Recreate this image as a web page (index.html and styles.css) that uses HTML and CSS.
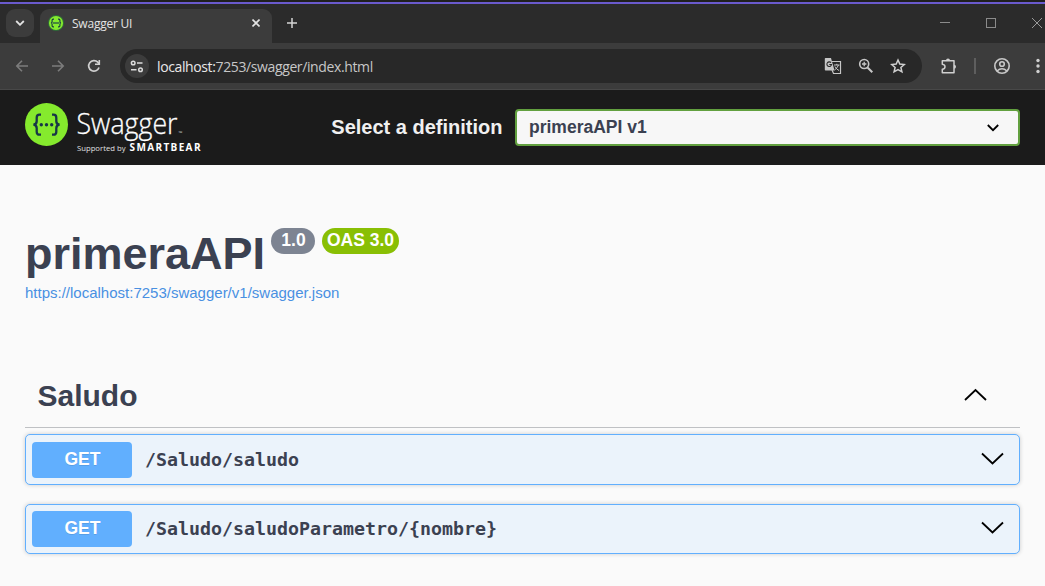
FILE: index.html
```html
<!DOCTYPE html>
<html lang="es">
<head>
<meta charset="utf-8">
<title>Swagger UI</title>
<link rel="stylesheet" href="styles.css">
</head>
<body>
<div class="desktop-edge"></div>
<div class="tab-strip">
  <div class="tab-search"><svg width="10" height="6" viewBox="0 0 10 6"><path d="M1.2 1L5 4.8L8.800 1" fill="none" stroke="#e3e3e3" stroke-width="1.8"/></svg></div>
  <div class="tab">
    <svg class="favicon" width="16" height="16" viewBox="0 0 43 43"><circle cx="21.500" cy="21.500" r="21.500" fill="#2f6b3a"/><circle cx="21.500" cy="21.500" r="19" fill="#85ea2d"/><g fill="none" stroke="#173647" stroke-width="3"><path d="M16 11h-2q-3 0-3 3v4q0 3-3 3.500q3 .5 3 3.500v4q0 3 3 3h2M27 11h2q3 0 3 3v4q0 3 3 3.500q-3 .5-3 3.500v4q0 3-3 3h-2"/><path d="M13 21.500h17"/></g></svg>
    <span class="tab-title">Swagger UI</span>
    <svg width="8" height="8" viewBox="0 0 8 8"><path d="M.5 .5L7.500 7.500M7.500 .5L.5 7.500" stroke="#e3e3e3" stroke-width="1.600"/></svg>
  </div>
  <svg class="new-tab" width="10" height="10" viewBox="0 0 10 10"><path d="M5 0V10M0 5H10" stroke="#d5d5d5" stroke-width="1.500"/></svg>
  <div class="window-buttons">
    <svg width="10" height="10" viewBox="0 0 10 10"><path d="M0 4.500H10" stroke="#8b8b8b"/></svg>
    <svg width="10" height="10" viewBox="0 0 10 10"><rect x=".5" y=".5" width="9" height="9" fill="none" stroke="#8b8b8b"/></svg>
    <svg width="10" height="10" viewBox="0 0 10 10"><path d="M0 0L10 10M10 0L0 10" stroke="#999"/></svg>
  </div>
</div>
<div class="toolbar">
  <div class="nav">
    <svg width="14" height="12" viewBox="0 0 14 12"><path d="M13 6H2M7 .8L1.800 6L7 11.200" fill="none" stroke="#7c7c7c" stroke-width="1.600"/></svg>
    <svg width="14" height="12" viewBox="0 0 14 12"><path d="M1 6H12M7 .8L12.200 6L7 11.200" fill="none" stroke="#7c7c7c" stroke-width="1.600"/></svg>
    <svg width="14" height="14" viewBox="0 0 14 14"><path d="M12 8.500A5.300 5.300 0 1 1 10.800 3.200L12 4.600" fill="none" stroke="#d0d0d0" stroke-width="1.700"/><path d="M12.300 1V5.200H8" fill="none" stroke="#d0d0d0" stroke-width="1.600"/></svg>
  </div>
  <div class="omnibox">
    <div class="site-info"><svg width="14" height="13" viewBox="0 0 14 13" fill="none" stroke="#dcdcdc" stroke-width="1.500"><circle cx="3.200" cy="3" r="1.800"/><path d="M7 3H12.500M1 9.800H6.500"/><circle cx="10.500" cy="9.800" r="1.800"/></svg></div>
    <span class="url"><span class="host">localhost:</span>7253/swagger/index.html</span>
    <div class="omni-icons">
      <svg width="18" height="18" viewBox="0 0 18 18"><path d="M8 4.500H16.500V16.500H9.500L8 13" fill="none" stroke="#c7c7c7" stroke-width="1.200"/><path d="M1.500 1H7L10.500 13.500H1.500Q.8 13.500 .8 12.800V1.700Q.8 1 1.500 1Z" fill="#c7c7c7"/><path d="M7 5.700A2.300 2.300 0 1 0 7.500 7.500H5.300" fill="none" stroke="#282828" stroke-width="1.100"/><path d="M10 8H15.500M12.800 6.800V8M14.500 8Q13.500 11 10.500 13M11 9.500Q12.500 12.500 15 13.500" fill="none" stroke="#c7c7c7"/></svg>
      <svg width="16" height="16" viewBox="0 0 16 16" fill="none" stroke="#c7c7c7"><circle cx="6.200" cy="6" r="4.500" stroke-width="1.600"/><path d="M9.500 9.500L14.300 14.300" stroke-width="2"/><path d="M6.200 3.800V8.200M4 6H8.400" stroke-width="1.300"/></svg>
      <svg width="16" height="16" viewBox="0 0 16 16"><path d="M8 2L9.800 6.100L14.200 6.500L10.900 9.400L11.900 13.800L8 11.500L4.100 13.800L5.100 9.400L1.800 6.500L6.200 6.100Z" fill="none" stroke="#d0d0d0" stroke-width="1.500"/></svg>
    </div>
  </div>
  <svg class="puzzle" width="18" height="18" viewBox="0 0 18 18"><path d="M2.300 3.700H14V15.800H2.300V12.300Q5 12 5 9.800Q5 7.600 2.300 7.200Z" fill="none" stroke="#d0d0d0" stroke-width="1.500" stroke-linejoin="round"/><path d="M6 3.500A2 2 0 0 1 10 3.500ZM14 7.700A2 2 0 0 1 14 11.700Z" fill="#d0d0d0"/></svg>
  <i class="divider"></i>
  <svg class="profile" width="18" height="18" viewBox="0 0 18 18" fill="none" stroke="#c7c7c7" stroke-width="1.600"><circle cx="9" cy="9" r="7.200"/><circle cx="9" cy="7" r="2.300"/><path d="M4 14Q9 9.500 14 14"/></svg>
  <svg class="kebab" width="4" height="16" viewBox="0 0 4 16" fill="#d0d0d0"><circle cx="2" cy="2.500" r="1.700"/><circle cx="2" cy="8" r="1.700"/><circle cx="2" cy="13.500" r="1.700"/></svg>
</div>
<header class="topbar">
  <svg class="logo" width="180" height="52" viewBox="0 0 180 52">
    <circle cx="21.500" cy="22.500" r="21.500" fill="#85ea2d"/>
    <g fill="none" stroke="#173647" stroke-width="2.300"><path d="M16 12.700h-1.500q-2.800 0-2.800 3v3.500q0 3-3.200 3.500q3.200 .5 3.200 3.500v3.500q0 3 2.800 3H16M27 12.700h1.500q2.800 0 2.800 3v3.500q0 3 3.200 3.500q-3.200 .5-3.200 3.500v3.500q0 3-2.800 3H27"/></g>
    <g fill="#173647"><circle cx="16.300" cy="22.700" r="1.700"/><circle cx="21.500" cy="22.700" r="1.700"/><circle cx="26.700" cy="22.700" r="1.700"/></g>
    <text class="logo-name" x="51.500" y="32" textLength="101" lengthAdjust="spacingAndGlyphs">Swagger</text>
    <text class="logo-tm" x="153.500" y="32.500">™</text>
    <text class="logo-by" x="52" y="49" textLength="48.500" lengthAdjust="spacingAndGlyphs">Supported by</text>
    <text class="logo-brand" x="104.500" y="49" textLength="71" lengthAdjust="spacing">SMARTBEAR</text>
  </svg>
  <label class="definition">
    <span class="definition-label">Select a definition</span>
    <span class="select"><span class="select-value">primeraAPI v1</span><svg width="12" height="8" viewBox="0 0 12 8"><path d="M.8 1L6 6.200L11.200 1" fill="none" stroke="#000" stroke-width="1.800"/></svg></span>
  </label>
</header>
<main class="page">
  <div class="title-row">
    <h1 class="title">primeraAPI</h1>
    <span class="badge badge-version">1.0</span>
    <span class="badge badge-oas">OAS 3.0</span>
  </div>
  <a class="spec-link">https://localhost:7253/swagger/v1/swagger.json</a>
  <section class="tag">
    <div class="tag-head"><h2 class="tag-name">Saludo</h2><svg width="24" height="14" viewBox="0 0 24 14"><path d="M2 12L12.500 2L23 12" fill="none" stroke="#000" stroke-width="1.800"/></svg></div>
    <div class="op op-first"><span class="method">GET</span><span class="path">/Saludo/saludo</span><svg class="arrow" width="24" height="14" viewBox="0 0 24 14"><path d="M2 1.500L12.500 11.500L23 1.500" fill="none" stroke="#000" stroke-width="1.800"/></svg></div>
    <div class="op"><span class="method">GET</span><span class="path">/Saludo/saludoParametro/{nombre}</span><svg class="arrow" width="24" height="14" viewBox="0 0 24 14"><path d="M2 1.500L12.500 11.500L23 1.500" fill="none" stroke="#000" stroke-width="1.800"/></svg></div>
  </section>
</main>
</body>
</html>
```
FILE: styles.css
```css
* { box-sizing: border-box; }
body { margin: 0; height: 586px; overflow: hidden; background: #fafafa; color: #3b4151; font-family: "Liberation Sans", Arial, sans-serif; }
svg { display: block; flex: none; }

.desktop-edge { height: 4px; background: #1f1f1f; border-bottom: 2px solid #6a5acd; }
.tab-strip { height: 39px; display: flex; background: #2b2b2b; padding: 5px 2px 0 6px; font-family: "Open Sans", sans-serif; }
.tab-search { width: 28px; height: 28px; border-radius: 9px; background: #3c3c3c; display: flex; align-items: center; justify-content: center; }
.tab { width: 232px; height: 34px; margin-left: 6px; padding: 0 12px 6px 8px; border-radius: 9px 9px 0 0; background: #3c3c3c; display: flex; align-items: center; }
.tab-title { margin-left: 8px; padding-top: 1px; flex: 1; font-size: 12px; letter-spacing: -0.22px; color: #e3e3e3; }
.new-tab { margin: 9px 0 0 15px; }
.window-buttons { margin: 9px 0 0 auto; display: flex; gap: 36px; margin-right: 1px; }

.toolbar { height: 47px; display: flex; align-items: center; background: #3c3c3c; border-bottom: 1px solid #484848; padding-left: 15px; }
.nav { display: flex; align-items: center; gap: 22px; width: 105px; }
.omnibox { width: 802px; height: 34px; border-radius: 17px; background: #282828; display: flex; align-items: center; padding: 0 16px 0 5px; }
.site-info { width: 24px; height: 24px; border-radius: 50%; background: #3c3c3c; display: flex; align-items: center; justify-content: center; }
.url { margin-left: 8px; flex: 1; font: 14px "Open Sans", sans-serif; letter-spacing: -0.38px; color: #c7c7c7; }
.host { color: #e8e8e8; }
.omni-icons { display: flex; align-items: center; gap: 16px; }
.puzzle { margin-left: 18px; }
.divider { width: 2px; height: 16px; margin-left: 16px; background: #5e5e5e; }
.profile { margin-left: 17px; }
.kebab { margin-left: 25px; }

.topbar { height: 75px; background: #1b1b1b; display: flex; align-items: center; padding: 0 25px; }
.logo-name { font: 300 28.5px "Open Sans", sans-serif; fill: #fff; stroke: #fff; stroke-width: .3px; }
.logo-tm { font: 5px "Open Sans", sans-serif; fill: #ccc; }
.logo-by { font: 8px "Open Sans", sans-serif; fill: #e0e0e0; }
.logo-brand { font: 700 10px "Open Sans", sans-serif; fill: #fff; }
.definition { margin-left: auto; display: flex; align-items: center; }
.definition-label { font-size: 20px; font-weight: bold; color: #f0f0f0; margin-right: 12.5px; }
.select { width: 505px; height: 37px; border: 2px solid #62a03f; border-radius: 4px; background: #f7f7f7; display: flex; align-items: center; justify-content: space-between; padding: 0 19px 0 12px; font-size: 17.5px; font-weight: bold; }
.select-value { padding-bottom: 1px; }

.page { padding: 60px 25px 0; }
.title-row { display: flex; align-items: flex-start; height: 59px; }
.title { margin: 3px 0 0; font-size: 45px; line-height: 52px; width: 246px; }
.badge { margin-top: 3px; height: 26px; border-radius: 13px; color: #fff; font-size: 17.5px; line-height: 24px; font-weight: bold; text-align: center; }
.badge-version { width: 44px; background: #7d8492; padding-left: 1px; }
.badge-oas { width: 77px; margin-left: 7px; background: #89bf04; }
.spec-link { display: block; font-size: 15px; line-height: 18px; color: #4990e2; }
.tag { margin-top: 61px; }
.tag-head { height: 65px; border-bottom: 1px solid #bfc1c4; display: flex; align-items: center; justify-content: space-between; padding: 0 33px 0 12.500px; }
.tag-name { margin: 0; padding-top: 2px; font-size: 30px; }
.op { height: 50px; margin-top: 19px; border: 1px solid #61affe; border-radius: 5px; background: #ebf3fb; box-shadow: 0 0 4px rgba(0,0,0,.19); display: flex; align-items: center; padding: 0 15px 0 6px; }
.op-first { height: 51px; margin-top: 6px; }
.method { width: 100px; height: 36px; border-radius: 4px; background: #61affe; color: #fff; font-size: 17.5px; line-height: 34px; font-weight: bold; text-align: center; padding-left: 1px; text-shadow: 0 1px 0 rgba(0,0,0,.1); }
.path { margin-left: 13px; padding-bottom: 1px; flex: 1; font: bold 18.27px "DejaVu Sans Mono", monospace; }
.arrow { margin-bottom: 2px; }
```
